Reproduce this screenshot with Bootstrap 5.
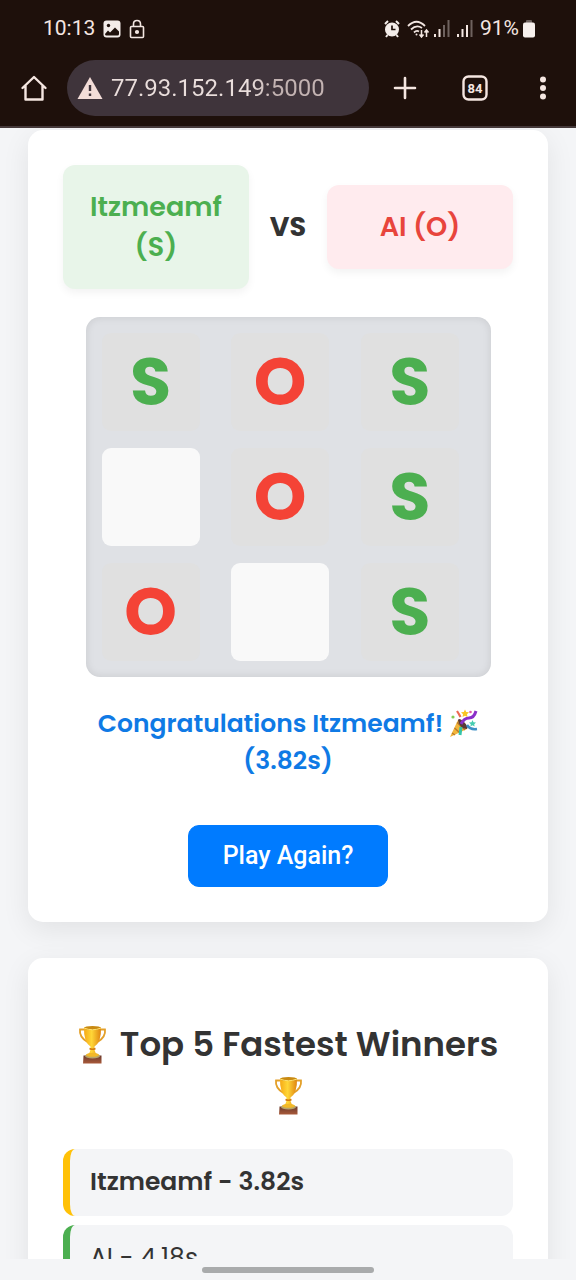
<!DOCTYPE html>
<html lang="en">
<head>
<meta charset="utf-8">
<meta name="viewport" content="width=device-width, initial-scale=1">
<title>SOS Game</title>
<link href="https://cdn.jsdelivr.net/npm/bootstrap@5.3.0/dist/css/bootstrap.min.css" rel="stylesheet">
<style>
  body { background: #f4f5f7; color: #333; font-family: Poppins, Inter, "Noto Sans", sans-serif; }

  /* Phone chrome */
  .phone-top { background: #1e100b; color: #f5e6e1; border-bottom: 2px solid #45393a; font-family: Roboto, sans-serif; }
  .phone-top svg { display: block; flex: none; }
  .status-row { height: 57px; padding: 0 41px 0 43px; font-size: 21px; }
  .status-end { gap: 7px; }
  .tool-row { height: 69px; padding: 0 23px 8px 20px; }
  .icon-btn { flex: none; background: none; border: 0; padding: 0; color: inherit; line-height: 0; }
  .tool-end { gap: 45px; }
  .menu-btn { width: 20px; display: flex; justify-content: center; }
  .address { min-width: 0; background: #3f343b; height: 56px; padding: 0 24px 0 10px; margin-left: 19px; margin-right: 24px; }
  .address input { width: 100%; min-width: 0; border: 0; outline: 0; padding: 0; font-size: 24px; line-height: 32px; color: transparent; background: linear-gradient(90deg, #eadedc 140px, #c3b3b2 160px) text; -webkit-background-clip: text; }
  .gesture-row { height: 21px; flex: none; }
  .gesture-pill { width: 30%; height: 6px; background: #a9abac; }

  /* Page */
  .page-area { padding: 2px 28px 0; min-height: 0; }
  .panel { background: #fff; border-radius: 15px; padding: 35px; box-shadow: 0 8px 28px rgba(0, 0, 0, .08); }
  .panel + .panel { margin-top: 36px; }
  .versus { gap: 21px; }
  .player { flex: 1 1 0; min-width: 0; padding: 22px 16px; border-radius: 12px; font-size: 27px; line-height: 40px; font-weight: 600; text-align: center; box-shadow: 0 4px 9px rgba(0, 0, 0, .05); }
  .player-s { background: #e8f5e9; color: #4caf50; }
  .player-o { background: #ffebee; color: #e8453c; }
  .vs-label { font-size: 27px; font-weight: 700; }

  .board { width: 90%; margin: 28px auto; padding: 16px; display: grid; grid-template-columns: repeat(3, 1fr); gap: 17px 16px; border-radius: 14px; background: #dfe1e5; box-shadow: inset 0 0 9px rgba(0, 0, 0, .1); }
  .cell { width: 98px; height: 98px; padding: 0; border: 0; border-radius: 9px; background: #f9f9f9; font-size: 67px; line-height: 98px; font-weight: 700; }
  .cell-s, .cell-o { background: #e0e0e0; }
  .cell-s { color: #4caf50; }
  .cell-o { color: #f44336; }

  .result { font-size: 25px; line-height: 37px; font-weight: 600; color: #0f7ae5; margin-bottom: 46px; }
  .result svg { width: 29px; height: 29px; vertical-align: -6px; }
  .again { --bs-btn-bg: #007bff; --bs-btn-border-color: #007bff; width: 200px; height: 62px; border-radius: 11px; font-family: Roboto, sans-serif; font-size: 25px; font-weight: 500; }

  .title { font-size: 34px; line-height: 51px; font-weight: 600; margin: 26px 0 28px; }
  .title svg { width: 29px; height: 39px; vertical-align: -8px; }
  .title svg:first-child { margin-right: 5px; }
  .ranks { gap: 9px; }
  .rank { background: #f4f5f7; border-left: 7px solid #4caf50; border-radius: 12px; padding: 13px 20px 15px; font-size: 25px; line-height: 39px; }
  .rank-first { border-color: #ffc107; font-weight: 600; }
</style>
</head>
<body>
<svg width="0" height="0" class="position-absolute" aria-hidden="true">
  <defs>
    <linearGradient id="gold" x1="0" x2="1"><stop offset="0" stop-color="#f6a915"/><stop offset=".45" stop-color="#ffd637"/><stop offset="1" stop-color="#df8410"/></linearGradient>
    <linearGradient id="wood" x1="0" x2="0" y1="0" y2="1"><stop offset="0" stop-color="#6b3a2c"/><stop offset="1" stop-color="#a95a3a"/></linearGradient>
    <symbol id="trophy" viewBox="0 0 29 39">
      <path d="M6.500 4.500H2Q1 12 9.500 17M22.500 4.500H27Q28 12 19.500 17" fill="none" stroke="#e3a02a" stroke-width="1.800"/>
      <path d="M6 2.500H23Q23.500 17 16.500 21.500V25Q17 28 20 30.500H9Q12 28 12.500 25V21.500Q5.500 17 6 2.500Z" fill="url(#gold)"/>
      <ellipse cx="14.500" cy="3" rx="8.500" ry="2" fill="#c98a12"/>
      <path d="M6 3Q14.500 6.500 23 3" fill="none" stroke="#ffe372" stroke-width="1"/>
      <path d="M11.500 23.500Q14.500 25 17.500 23.500" fill="none" stroke="#d47b0d" stroke-width="1.500"/>
      <path d="M5.500 30.500H23.500V38.500H5Z" fill="url(#wood)"/>
      <ellipse cx="14.500" cy="31" rx="7.500" ry="2.600" fill="#b8a56a"/>
      <ellipse cx="14.500" cy="29.800" rx="6.500" ry="2" fill="#f2b928"/>
    </symbol>
  </defs>
</svg>

<div class="vh-100 d-flex flex-column overflow-hidden">
  <header class="phone-top">
    <div class="status-row d-flex align-items-center">
      <span>10:13</span>
      <svg class="ms-2" width="18" height="18" viewBox="0 0 18 18" aria-hidden="true"><rect x=".5" y=".5" width="17" height="17" rx="3" fill="#f3ece9"/><circle cx="5.500" cy="5.500" r="1.700" fill="#1e100b"/><path d="M2 14 5 10.500 7 12.500 12 7.500 16 11.500V14Q16 15.500 14.500 15.500H3.500Q2 15.500 2 14Z" fill="#1e100b"/></svg>
      <svg class="ms-2" width="16" height="20" viewBox="0 0 16 20" fill="none" stroke="#f3e6e1" stroke-width="1.600" aria-hidden="true"><rect x="1.500" y="7.500" width="13" height="11" rx="1"/><path d="M4.500 7.500V5Q4.500 1.500 8 1.500T11.500 5V7.500"/><circle cx="8" cy="13" r="1.300" fill="#f3e6e1"/></svg>
      <div class="status-end ms-auto d-flex align-items-center">
        <svg width="16" height="18" viewBox="0 0 16 18" aria-hidden="true"><circle cx="8" cy="9.500" r="7" fill="#f3ece9"/><path d="M1 4 4 1M15 4 12 1M3.500 15 2 17M12.500 15 14 17" stroke="#f3ece9" stroke-width="2"/><path d="M8 5.500V9.500H11.500" stroke="#1e100b" stroke-width="1.700" fill="none"/></svg>
        <div class="d-flex align-items-center gap-1">
          <svg width="23" height="18" viewBox="0 0 23 18" fill="none" stroke="#f3e6e1" stroke-width="1.800" aria-hidden="true"><path d="M1 6Q9.500-2.500 18 6M4 9.500Q9.500 4 15 8M7 12.500Q9.500 10 12 11.500"/><circle cx="9.500" cy="14.500" r="1" fill="#f3e6e1" stroke="none"/><path d="M14.500 10V16M12.500 14.500 14.500 17 16.500 14.500M19.500 17V11M17.500 12.500 19.500 10 21.500 12.500" stroke-width="1.500"/></svg>
          <svg width="16" height="17" viewBox="0 0 16 17" fill="#f3e6e1" aria-hidden="true"><path d="M0 14H2V17H0ZM4.500 9H6.500V17H4.500Z"/><path fill="#6e625f" d="M9 5H11V17H9ZM13.500 0H15.500V17H13.500Z"/></svg>
        </div>
        <svg width="16" height="17" viewBox="0 0 16 17" fill="#f3e6e1" aria-hidden="true"><path d="M0 14H2V17H0ZM4.500 9H6.500V17H4.500ZM9 5H11V17H9Z"/><path fill="#6e625f" d="M13.500 0H15.500V17H13.500Z"/></svg>
        <div class="d-flex align-items-center">
          <span>91%</span>
          <svg class="ms-1" width="12" height="18" viewBox="0 0 12 18" aria-hidden="true"><rect x="3" width="6" height="4" rx="1" fill="#6e625f"/><rect y="2.500" width="12" height="15" rx="2" fill="#f7f0ed"/></svg>
        </div>
      </div>
    </div>
    <div class="tool-row d-flex align-items-center">
      <button class="icon-btn" type="button" aria-label="Home"><svg width="28" height="28" viewBox="0 0 28 28" fill="none" stroke="currentColor" stroke-width="2.400" stroke-linejoin="round" stroke-linecap="round"><path d="M2.500 14 14 3 25.500 14M5.500 12V25.500H22.500V12"/></svg></button>
      <div class="address rounded-pill d-flex align-items-center flex-grow-1">
        <svg width="26" height="24" viewBox="0 0 26 24" aria-hidden="true"><path d="M13 1 25.500 23H.5Z" fill="#f3ddd8"/><path d="M13 9V15M13 17.500V20" stroke="#3f343b" stroke-width="2.400"/></svg>
        <input class="ms-2" type="text" value="77.93.152.149:5000" aria-label="Address">
      </div>
      <div class="tool-end d-flex align-items-center">
        <button class="icon-btn" type="button" aria-label="New tab"><svg width="24" height="24" viewBox="0 0 24 24" stroke="currentColor" stroke-width="2.600" stroke-linecap="round"><path d="M12 2V22M2 12H22"/></svg></button>
        <button class="icon-btn" type="button" aria-label="Tabs"><svg width="26" height="26" viewBox="0 0 26 26"><rect x="1.500" y="1.500" width="23" height="23" rx="5" fill="none" stroke="currentColor" stroke-width="2.400"/><text x="13" y="17.500" text-anchor="middle" font-family="Roboto" font-size="13" font-weight="700" fill="currentColor">84</text></svg></button>
        <button class="icon-btn menu-btn" type="button" aria-label="Menu"><svg width="8" height="24" viewBox="0 0 8 24" fill="currentColor"><circle cx="4" cy="3.500" r="3"/><circle cx="4" cy="12" r="3"/><circle cx="4" cy="20.500" r="3"/></svg></button>
      </div>
    </div>
  </header>

  <main class="page-area flex-grow-1 overflow-hidden">
    <section class="panel text-center">
      <div class="versus d-flex align-items-center">
        <div class="player player-s">Itzmeamf (S)</div>
        <div class="vs-label">VS</div>
        <div class="player player-o">AI (O)</div>
      </div>
      <div class="board">
        <button class="cell cell-s" type="button">S</button>
        <button class="cell cell-o" type="button">O</button>
        <button class="cell cell-s" type="button">S</button>
        <button class="cell" type="button" aria-label="Empty cell"></button>
        <button class="cell cell-o" type="button">O</button>
        <button class="cell cell-s" type="button">S</button>
        <button class="cell cell-o" type="button">O</button>
        <button class="cell" type="button" aria-label="Empty cell"></button>
        <button class="cell cell-s" type="button">S</button>
      </div>
      <p class="result">Congratulations Itzmeamf!
        <svg viewBox="0 0 29 29" role="img" aria-label="Party popper"><path d="M1 28 9 11Q16 13 18 20Z" fill="#f2b53a"/><path d="M3 24 6 26M5.500 19 11 24M8 13.500 16 21" stroke="#b8792a" stroke-width="1.300"/><path d="M9 11Q10 8 15 13T18 20Q14 20 11.500 17T9 11Z" fill="#5b3a35"/><path d="M12 15Q15 9 20 9T27 2" fill="none" stroke="#8b2fc9" stroke-width="3"/><path d="M12 18 11 26" stroke="#35c4a8" stroke-width="3"/><path d="M18 16Q21 21 28 20" fill="none" stroke="#3c8fc4" stroke-width="2.500"/><path d="M8 2Q10 5 11.500 8" stroke="#ee6a50" stroke-width="2.200" fill="none"/><path d="m16 .5 1.200 2.500 2.800.3-2 2 .5 2.700-2.500-1.300L13.500 8 14 5.300 12 3.300l2.800-.3Z" fill="#f9c623"/><path d="m23.500 11 1 2.200 2.500.3-1.800 1.700.4 2.300-2.100-1.200-2.100 1.200.4-2.300L20 13.500l2.500-.3Z" fill="#46cdb0"/><circle cx="4" cy="8" r="1.600" fill="#85cc55"/><circle cx="21.500" cy="3" r="1.300" fill="#e45aa6"/></svg>
        (3.82s)</p>
      <button class="btn btn-primary again" type="button">Play Again?</button>
    </section>

    <section class="panel">
      <h2 class="title text-center"><svg role="img" aria-label="Trophy"><use href="#trophy"/></svg> Top 5 Fastest Winners <svg role="img" aria-label="Trophy"><use href="#trophy"/></svg></h2>
      <ol class="ranks list-unstyled d-flex flex-column">
        <li class="rank rank-first">Itzmeamf - 3.82s</li>
        <li class="rank">AI - 4.18s</li>
      </ol>
    </section>
  </main>

  <div class="gesture-row d-flex align-items-center justify-content-center">
    <div class="gesture-pill rounded-pill"></div>
  </div>
</div>
<script src="https://cdn.jsdelivr.net/npm/bootstrap@5.3.0/dist/js/bootstrap.bundle.min.js"></script>
</body>
</html>
